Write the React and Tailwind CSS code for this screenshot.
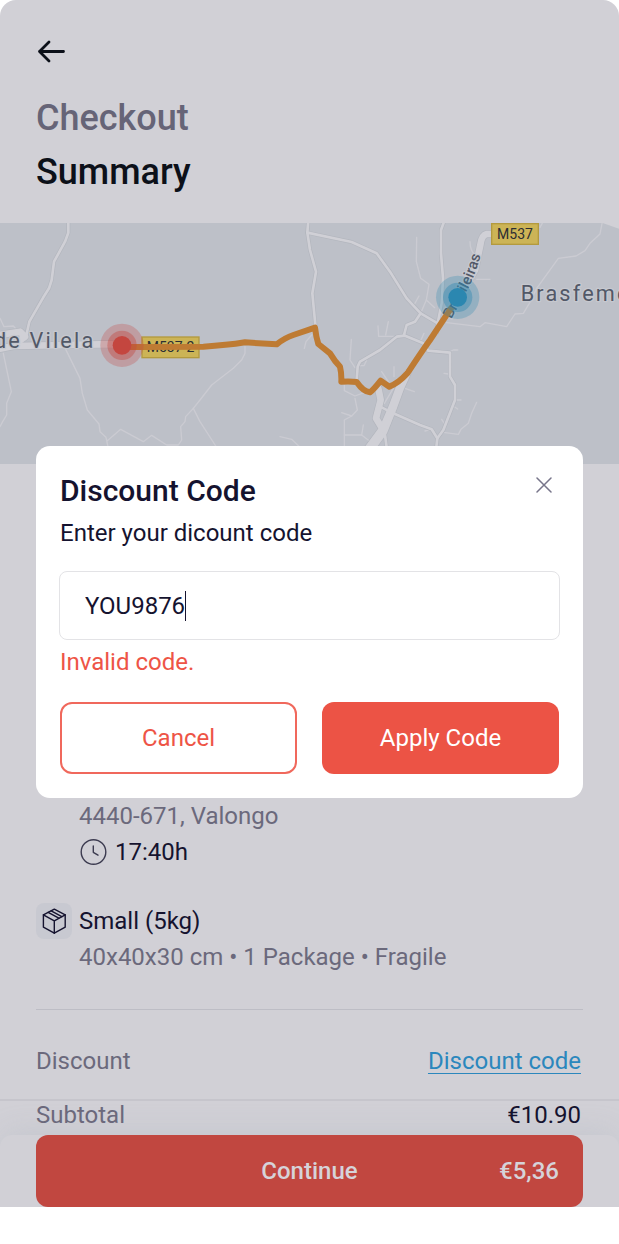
import React, { useState } from 'react';

const mainRoads = [
  'M205 0 V38 L195 65 L162 125 L155 180 L147 205 L130 232 L88 305 L78 350',
  'M925 0 L922 38 L930 90 L948 155 L937 220 L947 325',
  'M922 38 L1055 66 L1130 100 L1170 155 L1220 235 L1262 280 L1313 310',
  'M1334 0 L1323 30 V100 L1329 175 L1325 250 L1313 310 L1310 340',
  'M1070 480 L1073 440 L1080 425 L1140 390 L1190 350 L1215 347 L1270 370 L1285 392 L1350 398 V470 L1365 495 V540 L1330 630 L1312 655',
  'M1262 280 L1245 305 L1220 315 L1212 345',
  'M1145 562 L1180 580 L1260 615 L1295 628 L1312 655 L1308 690',
  'M1155 645 L1161 690',
];

const wideRoads = [
  'M0 386 L40 378 L300 373 H370',
  'M0 345 L60 335 L75 350 L40 375',
  'M1490 42 H1460 Q1445 45 1441 75 L1425 150 L1373 240',
  'M1222 460 L1202 505 L1182 560 L1152 635 L1112 690',
  'M1206 480 L1176 560 L1148 625 L1100 690',
  'M1135 505 L1142 540 L1128 595 L1148 628',
];

const trails = [
  'M10 400 L34 515 L20 550 V585 L8 605 L0 620',
  'M0 295 L12 320 L40 318 L55 335',
  'M197 388 L240 475 L247 520 L262 570 L297 612 L300 635 L318 652 L326 690',
  'M322 662 L362 628 L430 665 L455 646 L500 675 H535 L545 660 L542 620 L555 605 L557 590 L580 565 L600 540 L635 495 L700 445 L725 420 L735 400 V380',
  'M580 565 L600 605 L655 690',
  'M840 650 L875 658 L900 682',
  'M935 345 L918 365 L913 385',
  'M1250 52 L1249 125 L1262 175 L1287 193 L1279 240 L1262 280',
  'M1279 240 L1304 263',
  'M1257 228 L1242 255',
  'M1134 318 L1136 349 H1190',
  'M1165 305 L1157 345',
  'M1272 340 L1262 362',
  'M1054 358 L1050 420 L1065 443',
  'M1080 437 H1092 L1100 420',
  'M1033 495 V512 L1065 528 L1100 515',
  'M1065 535 L1072 570 L1055 588 L1025 578',
  'M1055 588 L1033 600 V690',
  'M1033 645 L1085 645 L1115 668',
  'M1085 645 L1090 615',
  'M1153 550 L1180 505',
  'M1145 455 L1165 485',
  'M1182 440 V470',
  'M1215 505 L1243 515',
  'M1365 540 H1383',
  'M1360 558 L1373 567',
  'M1332 460 L1345 462',
  'M1325 598 L1333 610',
  'M1275 633 L1292 628',
  'M1345 398 L1360 390 H1373',
  'M1330 637 L1375 643 L1383 628 L1405 610 L1415 580 L1430 547',
  'M1410 65 Q1410 90 1425 105',
  'M1430 178 H1470',
  'M1340 308 L1440 320 L1455 308 L1520 320 L1545 282 L1570 280 L1588 250 L1610 205 L1675 115 L1728 108 L1755 92 L1770 70 L1800 42 L1808 0',
  'M1632 0 L1620 22',
];

const route =
  'M370 381 H425 L610 380 Q680 376 735 367 L830 373 Q855 353 880 345 L945 323 Q948 350 955 372 L990 400 Q1005 425 1020 440 Q1025 460 1024 485 Q1050 483 1070 486 Q1090 515 1110 517 Q1120 510 1142 482 L1168 500 Q1195 490 1222 460 Q1265 395 1290 360 L1355 262';

const Marker = ({ x, y, color }) => (
  <g fill={color}>
    <circle cx={x} cy={y} r="65" opacity="0.28" />
    <circle cx={x} cy={y} r="44" opacity="0.4" />
    <circle cx={x} cy={y} r="28" />
  </g>
);

const RoadPlate = ({ x, y, width, label }) => (
  <g>
    <rect x={x} y={y} width={width} height="62" fill="#ccb456" stroke="#b39a3e" strokeWidth="4" />
    <text x={x + width / 2} y={y + 45} textAnchor="middle" fontSize="42" fill="#2b2e33">
      {label}
    </text>
  </g>
);

const RouteMap = () => (
  <svg
    viewBox="0 9 1857 723"
    preserveAspectRatio="xMidYMid slice"
    className="block h-[241px] w-full bg-[#bdc0c8]"
    role="img"
    aria-label="Route"
  >
    <g fill="none" strokeLinejoin="round" strokeLinecap="round">
      {trails.map((d) => (
        <path key={d} d={d} stroke="#cbcbd2" strokeWidth="4" />
      ))}
      {mainRoads.map((d) => (
        <path key={d} d={d} stroke="#b3b6be" strokeWidth="12" />
      ))}
      {wideRoads.map((d) => (
        <path key={d} d={d} stroke="#b3b6be" strokeWidth="24" />
      ))}
      {mainRoads.map((d) => (
        <path key={d} d={d} stroke="#d0d0d6" strokeWidth="8" />
      ))}
      {wideRoads.map((d) => (
        <path key={d} d={d} stroke="#d0d0d6" strokeWidth="20" />
      ))}
    </g>
    <path d="M1808 9 L1857 26 V9 Z" fill="#d1d0d6" />

    <g fill="#525867" stroke="#c6c8cf" strokeWidth="8" paintOrder="stroke" strokeLinejoin="round">
      <text x="286" y="384" fontSize="65" textAnchor="end" className="tracking-widest">de Vilela</text>
      <text x="1562" y="243" fontSize="65" className="tracking-widest">Brasfemes</text>
      <path id="street" d="M1354 298 L1402 210 Q1430 160 1458 50" fill="none" stroke="none" />
      <text fontSize="45" fontWeight="500">
        <textPath href="#street">Brasileiras</textPath>
      </text>
    </g>

    <RoadPlate x={426} y={351} width={171} label="M537-2" />
    <RoadPlate x={1475} y={11} width={140} label="M537" />

    <path d={route} fill="none" stroke="#be7b33" strokeWidth="18" strokeLinejoin="round" />
    <Marker x={366} y={376} color="#c4463f" />
    <Marker x={1373} y={232} color="#2b87b0" />
  </svg>
);

const ArrowIcon = () => (
  <svg viewBox="0 0 30 30" className="h-[30px] w-[30px]" fill="none" stroke="#0c1019" strokeWidth="2.8" strokeLinecap="round" strokeLinejoin="round">
    <path d="M27.5 15.5H3.5M13 6L3.5 15.5L13 25" />
  </svg>
);

const ClockIcon = () => (
  <svg viewBox="0 0 28 28" className="h-7 w-7" fill="none" stroke="#3c3b50" strokeWidth="1.4" strokeLinecap="round" strokeLinejoin="round">
    <circle cx="14.5" cy="14" r="12.3" />
    <path d="M14.3 8V14.3L19 17.2" />
  </svg>
);

const PackageIcon = () => (
  <svg viewBox="0 0 26 28" className="h-7 w-[26px]" fill="none" stroke="#15132f" strokeWidth="1.4" strokeLinejoin="round" strokeLinecap="round">
    <path d="M13.3 2.2L24.2 7.8V20.2L13.3 26.2L2.4 20.2V7.8Z" />
    <path d="M2.4 7.8L13.3 13.9L24.2 7.8M13.3 13.9V26.2" />
    <path d="M7.2 5.3L17.8 11.2M10.2 3.8L20.8 9.6" />
  </svg>
);

const CloseIcon = () => (
  <svg viewBox="0 0 16 16" className="h-4 w-4" fill="none" stroke="#77758a" strokeWidth="1.5" strokeLinecap="round">
    <path d="M1 1L15 15M15 1L1 15" />
  </svg>
);

const DiscountDialog = () => {
  const [code, setCode] = useState('YOU9876');

  return (
    <div className="fixed inset-0 z-10 flex items-center px-9">
      <form
        role="dialog"
        aria-labelledby="discount-title"
        onSubmit={(e) => e.preventDefault()}
        className="w-full rounded-[14px] bg-white p-6"
      >
        <div className="flex items-start justify-between">
          <h2 id="discount-title" className="text-[30px] leading-[42px] font-medium">Discount Code</h2>
          <button type="button" aria-label="Close" className="flex h-[30px] w-[30px] items-center justify-center">
            <CloseIcon />
          </button>
        </div>
        <label htmlFor="code" className="block leading-[42px]">Enter your dicount code</label>

        <div className="-mx-px mt-[17px] flex h-[69px] items-center rounded-lg border border-[#e3e3e6] px-[25px]">
          <input
            id="code"
            type="text"
            value={code}
            onChange={(e) => setCode(e.target.value)}
            className="field-sizing-content caret-transparent outline-none"
          />
          <span className="h-[30px] w-px bg-[#15132f]" />
        </div>
        <p className="mt-1 leading-9 text-[#ee5446]">Invalid code.</p>

        <div className="mt-[22px] grid grid-cols-2 gap-[25px]">
          <button
            type="button"
            onClick={() => setCode('')}
            className="h-[72px] rounded-xl border-2 border-[#f0685c] text-[#ee5446]"
          >
            Cancel
          </button>
          <button type="submit" className="h-[72px] rounded-xl bg-[#ec5345] text-white">
            Apply Code
          </button>
        </div>
      </form>
    </div>
  );
};

const App = () => {
  return (
    <div className="font-[Roboto,sans-serif] text-2xl text-[#15132f]">
      <main className="overflow-hidden rounded-t-2xl bg-[#d1d0d6]">
        <header className="px-9 pt-9 pb-6">
          <button aria-label="Back" className="mb-[25px] block">
            <ArrowIcon />
          </button>
          <h1 className="text-4xl leading-[54px] font-medium text-[#0c1019]">
            <span className="block text-[#666477]">Checkout</span>
            <span className="block">Summary</span>
          </h1>
        </header>

        <RouteMap />

        <section className="px-9 pt-[334px] leading-9">
          <div className="pl-[43px]">
            <p className="text-[#6b697c]">4440-671, Valongo</p>
            <p className="flex items-center gap-2">
              <ClockIcon />
              17:40h
            </p>
          </div>

          <div className="mt-[33px] flex gap-[7px]">
            <div className="flex h-9 w-9 shrink-0 items-center justify-center rounded-lg bg-[#c8c9d1]">
              <PackageIcon />
            </div>
            <div>
              <p>Small (5kg)</p>
              <p className="text-[#6b697c]">40x40x30 cm • 1 Package • Fragile</p>
            </div>
          </div>

          <div className="mt-[34px] flex justify-between border-t border-[#bdbdc5] pt-[33px] pr-0.5 pb-5">
            <span className="text-[#6b697c]">Discount</span>
            <a href="#discount" className="text-[#2b87bd] underline decoration-1 underline-offset-4">Discount code</a>
          </div>
        </section>

        <section className="flex justify-between border-t-2 border-[#c6c5cc] pr-[38px] pb-1.5 pl-9 leading-7">
          <span className="text-[#6b697c]">Subtotal</span>
          <span>€10.90</span>
        </section>

        <footer className="rounded-t-xl bg-[#d1d0d6] px-9 shadow-[0_-8px_28px_-4px_rgba(150,165,180,0.2)]">
          <button className="grid h-[72px] w-full grid-cols-3 items-center rounded-xl bg-[#c14740] px-6 font-medium text-[#d6d3d9]">
            <span className="col-start-2">Continue</span>
            <span className="text-right">€5,36</span>
          </button>
        </footer>
      </main>

      <DiscountDialog />
    </div>
  );
};

export default App;
